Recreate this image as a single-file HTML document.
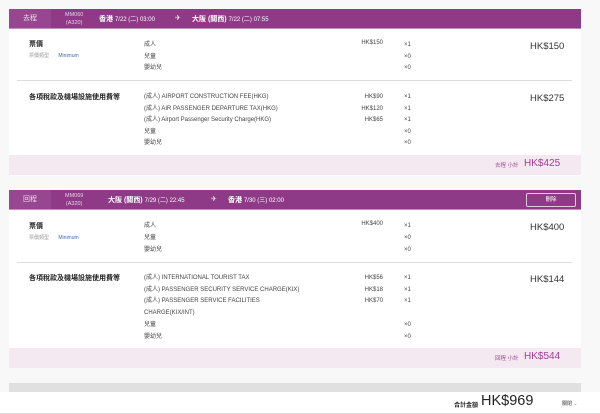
<!DOCTYPE html>
<html><head><meta charset="utf-8"><style>
*{margin:0;padding:0;box-sizing:border-box}
body{width:600px;height:414px;background:#f8f8f8;font-family:"Liberation Sans","Noto Sans CJK TC",sans-serif;position:relative;overflow:hidden;color:#333}
.a{position:absolute;white-space:nowrap}
.card{position:absolute;left:9px;width:572px;background:#fff}
.hd{position:absolute;left:9px;width:572px;height:20px;background:#8e3a86;color:#fff;border-bottom:1px solid #c58cbf}
.hd .t{position:absolute;left:0;top:0;width:42px;height:19px;background:#97478f;font-size:7px;line-height:19px;text-align:center;color:#f0dcef}
.s{font-size:6px;color:#444}
.lb{font-size:7px;font-weight:bold;color:#222}
.big{font-size:9.5px;color:#333}
.sub{position:absolute;left:9px;width:572px;height:20px;background:#f5e9f1}
.hr{position:absolute;left:17px;width:555px;height:1px;background:#ddd}
</style></head><body>
<div class="card" style="top:9px;height:167px"></div>
<div class="hd" style="top:9px"><div class="t">去程</div>
<div class="a" style="left:56px;top:2px;font-size:5.5px;color:#e8d0e6;text-align:center;line-height:8px">MM060<br>(A320)</div>
<div class="a" style="left:90px;top:5px;font-size:7px"><b>香港</b> <span style="font-size:6px">7/22 (二) 03:00</span></div>
<div class="a" style="left:166px;top:5px;font-size:7px">✈</div>
<div class="a" style="left:183px;top:5px;font-size:7px"><b>大阪 (關西)</b> <span style="font-size:6px">7/22 (二) 07:55</span></div>
</div>
<div class="a lb" style="left:29px;top:39px">票價</div>
<div class="a" style="left:29px;top:52px;font-size:5px;color:#999">票價類型 <span style="color:#3a6fb0;margin-left:8px">Minimum</span></div>
<div class="a s" style="left:144px;top:40px;line-height:11.5px">成人<br>兒童<br>嬰幼兒</div>
<div class="a s" style="left:340px;width:43px;text-align:right;top:40px">HK$150</div>
<div class="a s" style="left:404px;top:40px;line-height:11.5px">×1<br>×0<br>×0</div>
<div class="a big" style="left:530px;top:41px">HK$150</div>
<div class="hr" style="top:80px"></div>
<div class="a lb" style="left:29px;top:92px">各項稅款及機場設施使用費等</div>
<div class="a s" style="left:144px;top:92px;line-height:11.6px">(成人) AIRPORT CONSTRUCTION FEE(HKG)<br>(成人) AIR PASSENGER DEPARTURE TAX(HKG)<br>(成人) Airport Passenger Security Charge(HKG)<br>兒童<br>嬰幼兒</div>
<div class="a s" style="left:340px;width:43px;text-align:right;top:92px;line-height:11.6px">HK$90<br>HK$120<br>HK$65</div>
<div class="a s" style="left:404px;top:92px;line-height:11.6px">×1<br>×1<br>×1<br>×0<br>×0</div>
<div class="a big" style="left:530px;top:93px">HK$275</div>
<div class="sub" style="top:155px"></div>
<div class="a" style="left:495px;top:161px;font-size:5.5px;color:#9a4a92">去程 小計</div>
<div class="a" style="left:524px;top:158px;font-size:10px;color:#a03c98">HK$425</div>

<div class="card" style="top:190px;height:178px"></div>
<div class="hd" style="top:190px"><div class="t">回程</div>
<div class="a" style="left:56px;top:2px;font-size:5.5px;color:#e8d0e6;text-align:center;line-height:8px">MM069<br>(A320)</div>
<div class="a" style="left:99px;top:5px;font-size:7px"><b>大阪 (關西)</b> <span style="font-size:6px">7/29 (二) 22:45</span></div>
<div class="a" style="left:202px;top:5px;font-size:7px">✈</div>
<div class="a" style="left:219px;top:5px;font-size:7px"><b>香港</b> <span style="font-size:6px">7/30 (三) 02:00</span></div>
<div class="a" style="left:517px;top:3px;width:50px;height:14px;border:1px solid #e6c4e2;border-radius:2px;font-size:5.5px;text-align:center;line-height:12px">刪除</div>
</div>
<div class="a lb" style="left:29px;top:221px">票價</div>
<div class="a" style="left:29px;top:234px;font-size:5px;color:#999">票價類型 <span style="color:#3a6fb0;margin-left:8px">Minimum</span></div>
<div class="a s" style="left:144px;top:221px;line-height:11.8px">成人<br>兒童<br>嬰幼兒</div>
<div class="a s" style="left:340px;width:43px;text-align:right;top:221px">HK$400</div>
<div class="a s" style="left:404px;top:221px;line-height:11.8px">×1<br>×0<br>×0</div>
<div class="a big" style="left:530px;top:222px">HK$400</div>
<div class="hr" style="top:262px"></div>
<div class="a lb" style="left:29px;top:273px">各項稅款及機場設施使用費等</div>
<div class="a s" style="left:144px;top:273px;line-height:11.7px">(成人) INTERNATIONAL TOURIST TAX<br>(成人) PASSENGER SECURITY SERVICE CHARGE(KIX)<br>(成人) PASSENGER SERVICE FACILITIES<br>CHARGE(KIX/INT)<br>兒童<br>嬰幼兒</div>
<div class="a s" style="left:340px;width:43px;text-align:right;top:273px;line-height:11.7px">HK$56<br>HK$18<br>HK$70</div>
<div class="a s" style="left:404px;top:273px;line-height:11.7px">×1<br>×1<br>×1<br><br>×0<br>×0</div>
<div class="a big" style="left:530px;top:274px">HK$144</div>
<div class="sub" style="top:348px"></div>
<div class="a" style="left:495px;top:354px;font-size:5.5px;color:#9a4a92">回程 小計</div>
<div class="a" style="left:524px;top:351px;font-size:10px;color:#a03c98">HK$544</div>

<div class="a" style="left:9px;top:383px;width:572px;height:12px;background:#e0e0e0"></div>
<div class="a" style="left:0;top:392px;width:600px;height:22px;background:#fff;border-bottom:1px solid #ddd"></div>
<div class="a" style="left:454px;top:400px;font-size:6px;color:#222;font-weight:bold">合計金額</div>
<div class="a" style="left:481px;top:393px;font-size:14.5px;color:#222">HK$969</div>
<div class="a" style="left:562px;top:400px;font-size:5px;color:#333">關閉 <span style="color:#999">⌄</span></div>
</body></html>
